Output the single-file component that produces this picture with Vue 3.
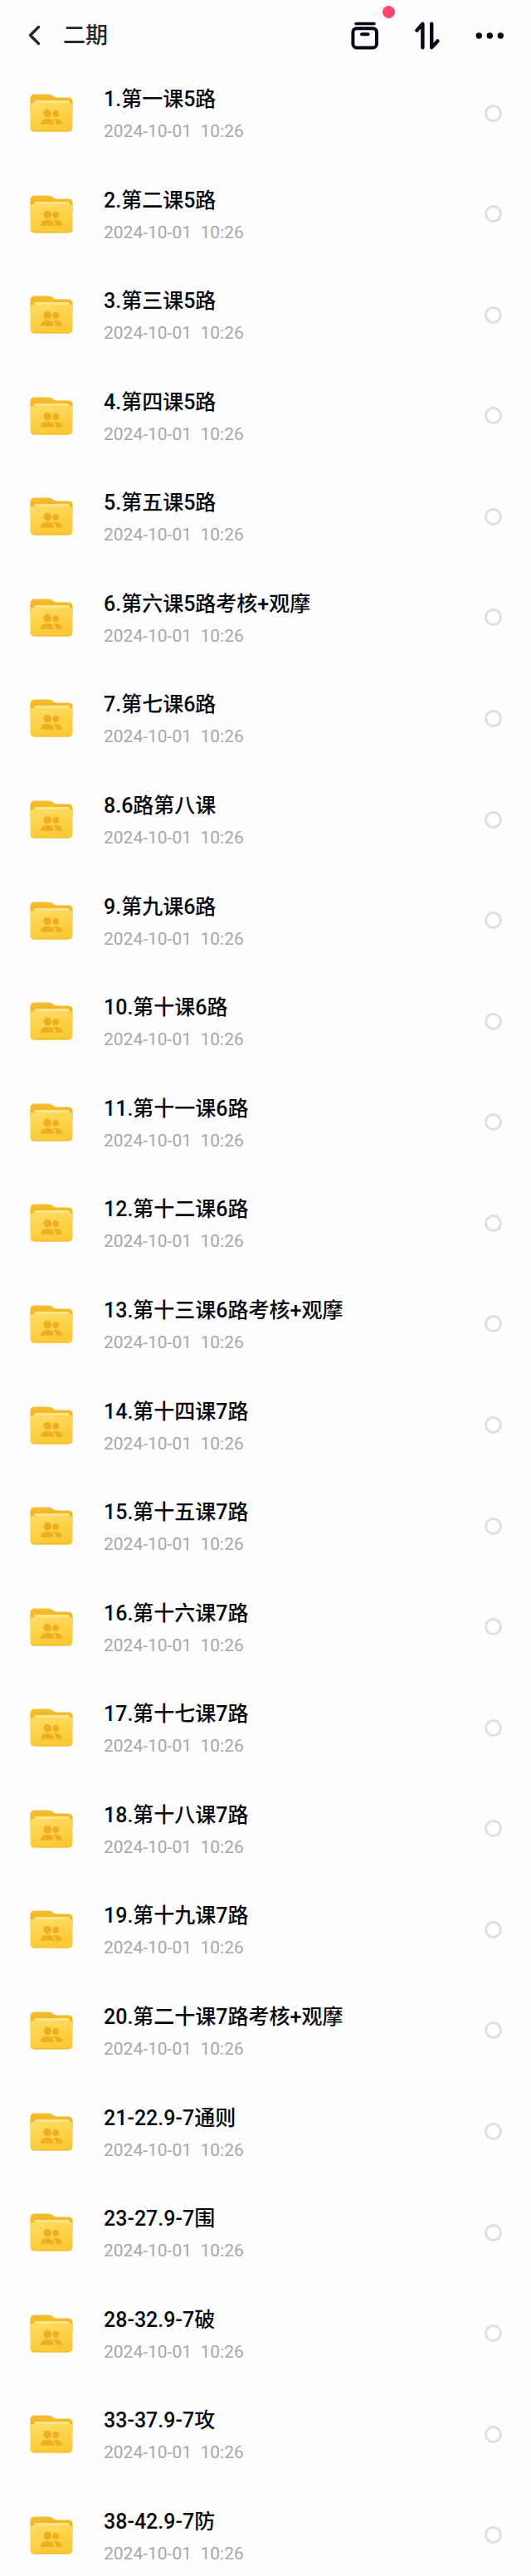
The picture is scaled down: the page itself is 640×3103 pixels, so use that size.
<script setup>
import { ref } from 'vue';

const title = '二期';

const names = [
  '1.第一课5路',
  '2.第二课5路',
  '3.第三课5路',
  '4.第四课5路',
  '5.第五课5路',
  '6.第六课5路考核+观摩',
  '7.第七课6路',
  '8.6路第八课',
  '9.第九课6路',
  '10.第十课6路',
  '11.第十一课6路',
  '12.第十二课6路',
  '13.第十三课6路考核+观摩',
  '14.第十四课7路',
  '15.第十五课7路',
  '16.第十六课7路',
  '17.第十七课7路',
  '18.第十八课7路',
  '19.第十九课7路',
  '20.第二十课7路考核+观摩',
  '21-22.9-7通则',
  '23-27.9-7围',
  '28-32.9-7破',
  '33-37.9-7攻',
  '38-42.9-7防'
];

const folders = names.map((name, index) => ({
  id: index + 1,
  name,
  date: '2024-10-01',
  time: '10:26'
}));

const selected = ref([]);
</script>

<template>
  <div class="page">
    <!-- gradients shared by every folder icon -->
    <svg class="defs" aria-hidden="true">
      <defs>
        <linearGradient id="folder-back" x1="0" y1="0" x2="0" y2="1">
          <stop offset="0" stop-color="#f8bf2e" />
          <stop offset="1" stop-color="#eba81c" />
        </linearGradient>
        <linearGradient id="folder-front" x1="0" y1="0" x2="0.3" y2="1">
          <stop offset="0" stop-color="#ffdc63" />
          <stop offset="1" stop-color="#fcc936" />
        </linearGradient>
      </defs>
    </svg>

    <header class="top-bar">
      <button class="icon-btn" type="button" aria-label="返回">
        <svg viewBox="0 0 36 36">
          <path d="M22.5 7.5 L12.5 17.5 L22.5 27.5" fill="none" stroke="#26282c" stroke-width="3.4" stroke-linecap="round" stroke-linejoin="round" />
        </svg>
      </button>
      <h1 class="title">{{ title }}</h1>
      <div class="actions">
        <button class="icon-btn" type="button" aria-label="传输列表">
          <svg viewBox="0 0 36 36" fill="none" stroke="#050915" stroke-width="4" stroke-linecap="round">
            <path d="M7 3.5 H29" stroke-width="3.6" />
            <rect x="3.4" y="9.2" width="28.6" height="23.2" rx="4.5" />
            <path d="M14 16.2 H21.5" />
          </svg>
          <span class="badge"></span>
        </button>
        <button class="icon-btn" type="button" aria-label="排序">
          <svg viewBox="0 0 36 36" fill="none" stroke="#050915" stroke-width="4.4" stroke-linecap="round" stroke-linejoin="round">
            <path d="M5.4 11.6 L12.4 3.8 V32.2" />
            <path d="M23.2 3.8 V32.2 L30.4 24.4" />
          </svg>
        </button>
        <button class="icon-btn" type="button" aria-label="更多">
          <svg viewBox="0 0 36 36" fill="#050915">
            <circle cx="5.3" cy="18" r="3.7" />
            <circle cx="18.3" cy="18" r="3.7" />
            <circle cx="31.3" cy="18" r="3.7" />
          </svg>
        </button>
      </div>
    </header>

    <ul class="folder-list">
      <li v-for="folder in folders" :key="folder.id">
        <label class="folder-row">
          <svg class="folder-icon" viewBox="0 0 52 46" aria-hidden="true">
            <path d="M0.5 6 Q0.5 0.5 6 0.5 H22.5 Q25 0.5 27 2 L29.5 3.8 Q31 4.6 33 4.6 H46 Q51.5 4.6 51.5 10 V20 H0.5 Z" fill="url(#folder-back)" />
            <rect x="5" y="8" width="43" height="12" rx="2" fill="#ffe488" />
            <path d="M0.5 14 Q0.5 11 3.5 11 H48.5 Q51.5 11 51.5 14 V40 Q51.5 45.5 46 45.5 H6 Q0.5 45.5 0.5 40 Z" fill="url(#folder-front)" />
            <path d="M1.2 42 Q2.4 45 6 45 H46 Q49.6 45 50.8 42" fill="none" stroke="#f3b730" stroke-width="1" />
            <g fill="#efad1f">
              <circle cx="21.2" cy="23.6" r="4.8" />
              <circle cx="31.2" cy="24" r="3.9" />
              <path d="M13.2 36.8 V35.4 Q14.4 30 21 30 Q27.6 30 28.8 35.4 V36.8 Z" />
              <path d="M28.2 30.2 Q37.4 29.2 38.8 35.4 V36.8 H31.4 Q31.6 32.6 28.2 30.2 Z" />
            </g>
          </svg>
          <span class="info">
            <span class="name">{{ folder.name }}</span>
            <span class="date">{{ folder.date }}&nbsp; {{ folder.time }}</span>
          </span>
          <input v-model="selected" class="check" type="checkbox" :value="folder.id" />
        </label>
      </li>
    </ul>
  </div>
</template>

<style>
body {
  margin: 0;
  background: #fefefe;
}
</style>

<style scoped>
.page {
  display: flex;
  flex-direction: column;
  min-height: 100vh;
  font-family: Roboto, "Noto Sans CJK SC", sans-serif;
  color: #06080f;
}

.defs {
  position: absolute;
  width: 0;
  height: 0;
}

.top-bar {
  display: flex;
  align-items: center;
  height: 86px;
  padding: 0 32px 0 24px;
}

.icon-btn {
  position: relative;
  width: 36px;
  height: 36px;
  padding: 0;
  border: none;
  background: none;
  cursor: pointer;
}

.icon-btn svg {
  display: block;
  width: 36px;
  height: 36px;
}

.badge {
  position: absolute;
  top: -18px;
  right: -18px;
  width: 15px;
  height: 15px;
  border-radius: 50%;
  background: #fb456b;
}

.title {
  flex: 1;
  margin: 0 0 0 16px;
  font-size: 27px;
  line-height: 36px;
  font-weight: 500;
  color: #26282c;
}

.actions {
  display: flex;
  gap: 39px;
}

.folder-list {
  flex: 1;
  display: flex;
  flex-direction: column;
  justify-content: space-between;
  gap: 40px;
  margin: 0;
  padding: 14px 35px 13px 36px;
  list-style: none;
}

.folder-row {
  display: flex;
  align-items: center;
  gap: 37px;
  cursor: pointer;
}

.folder-icon {
  flex: none;
  width: 52px;
  height: 46px;
}

.info {
  flex: 1;
  display: flex;
  flex-direction: column;
  gap: 4px;
  min-width: 0;
}

.name {
  font-size: 25px;
  line-height: 40px;
  font-weight: 500;
}

.date {
  font-size: 21px;
  line-height: 28px;
  color: #a6a8aa;
}

.check {
  appearance: none;
  flex: none;
  width: 21px;
  height: 21px;
  margin: 0;
  border: 3px solid #dfdfdf;
  border-radius: 50%;
  background: #ffffff;
  cursor: pointer;
}

.check:checked {
  border-color: #fb456b;
  background: #fb456b;
}
</style>
